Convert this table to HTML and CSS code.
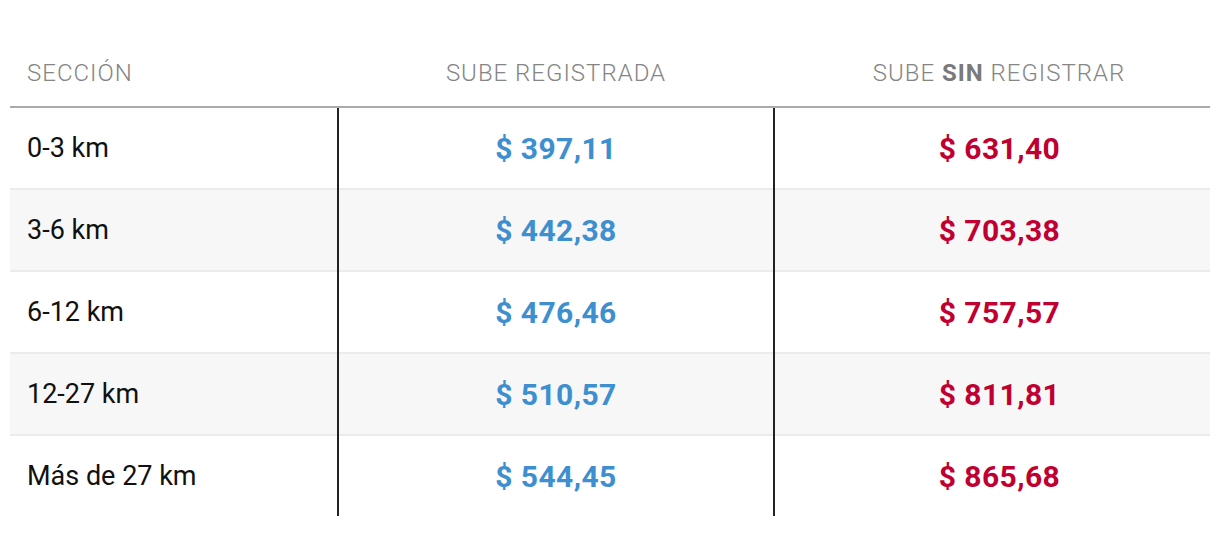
FILE: index.html
```html
<!DOCTYPE html>
<html lang="es">
<head>
<meta charset="utf-8">
<link rel="stylesheet" href="styles.css">
</head>
<body>
<table class="fares">
  <thead>
    <tr>
      <th class="col-sec">SECCIÓN</th>
      <th class="col-reg">SUBE REGISTRADA</th>
      <th class="col-sin">SUBE <b>SIN</b> REGISTRAR</th>
    </tr>
  </thead>
  <tbody>
    <tr><td class="col-sec">0-3 km</td><td class="col-reg price-reg">$ 397,11</td><td class="col-sin price-sin">$ 631,40</td></tr>
    <tr class="alt"><td class="col-sec">3-6 km</td><td class="col-reg price-reg">$ 442,38</td><td class="col-sin price-sin">$ 703,38</td></tr>
    <tr><td class="col-sec">6-12 km</td><td class="col-reg price-reg">$ 476,46</td><td class="col-sin price-sin">$ 757,57</td></tr>
    <tr class="alt"><td class="col-sec">12-27 km</td><td class="col-reg price-reg">$ 510,57</td><td class="col-sin price-sin">$ 811,81</td></tr>
    <tr><td class="col-sec">Más de 27 km</td><td class="col-reg price-reg">$ 544,45</td><td class="col-sin price-sin">$ 865,68</td></tr>
  </tbody>
</table>
</body>
</html>
```
FILE: styles.css
```css
html, body {
  margin: 0;
  padding: 0;
  background: #fff;
}
body {
  font-family: Roboto, "Liberation Sans", sans-serif;
  color: #111;
}
.fares {
  margin: 40px 10px 0;
  width: 1200px;
  border-collapse: collapse;
  border-spacing: 0;
  table-layout: fixed;
}
.fares th {
  height: 66px;
  padding: 0;
  font-weight: 300;
  font-size: 24px;
  letter-spacing: 1px;
  color: #858585;
  text-align: center;
  vertical-align: middle;
  border-bottom: 2px solid #aaaaaa;
}
.fares th b {
  font-weight: 700;
  color: #7a7a7a;
}
.fares td {
  height: 80px;
  padding: 0;
  vertical-align: middle;
  text-align: center;
  font-size: 27px;
}
.fares tbody tr + tr td {
  border-top: 2px solid #ebebeb;
}
.fares tr.alt td {
  background: #f7f7f7;
}
.fares .col-sec {
  width: 311px;
  padding-left: 17px;
  text-align: left;
}
.fares th.col-sec {
  padding-left: 17px;
}
.fares .col-reg {
  width: 436px;
}
.fares .col-sin {
  padding-left: 14px;
}
.fares td.col-reg,
.fares td.col-sin {
  border-left: 2px solid #222;
}
.fares td.price-reg,
.fares td.price-sin {
  font-weight: 700;
  font-size: 30px;
  letter-spacing: 0.4px;
}
.fares td.price-reg {
  color: #3d8fcf;
}
.fares td.price-sin {
  color: #bf0030;
}
```
